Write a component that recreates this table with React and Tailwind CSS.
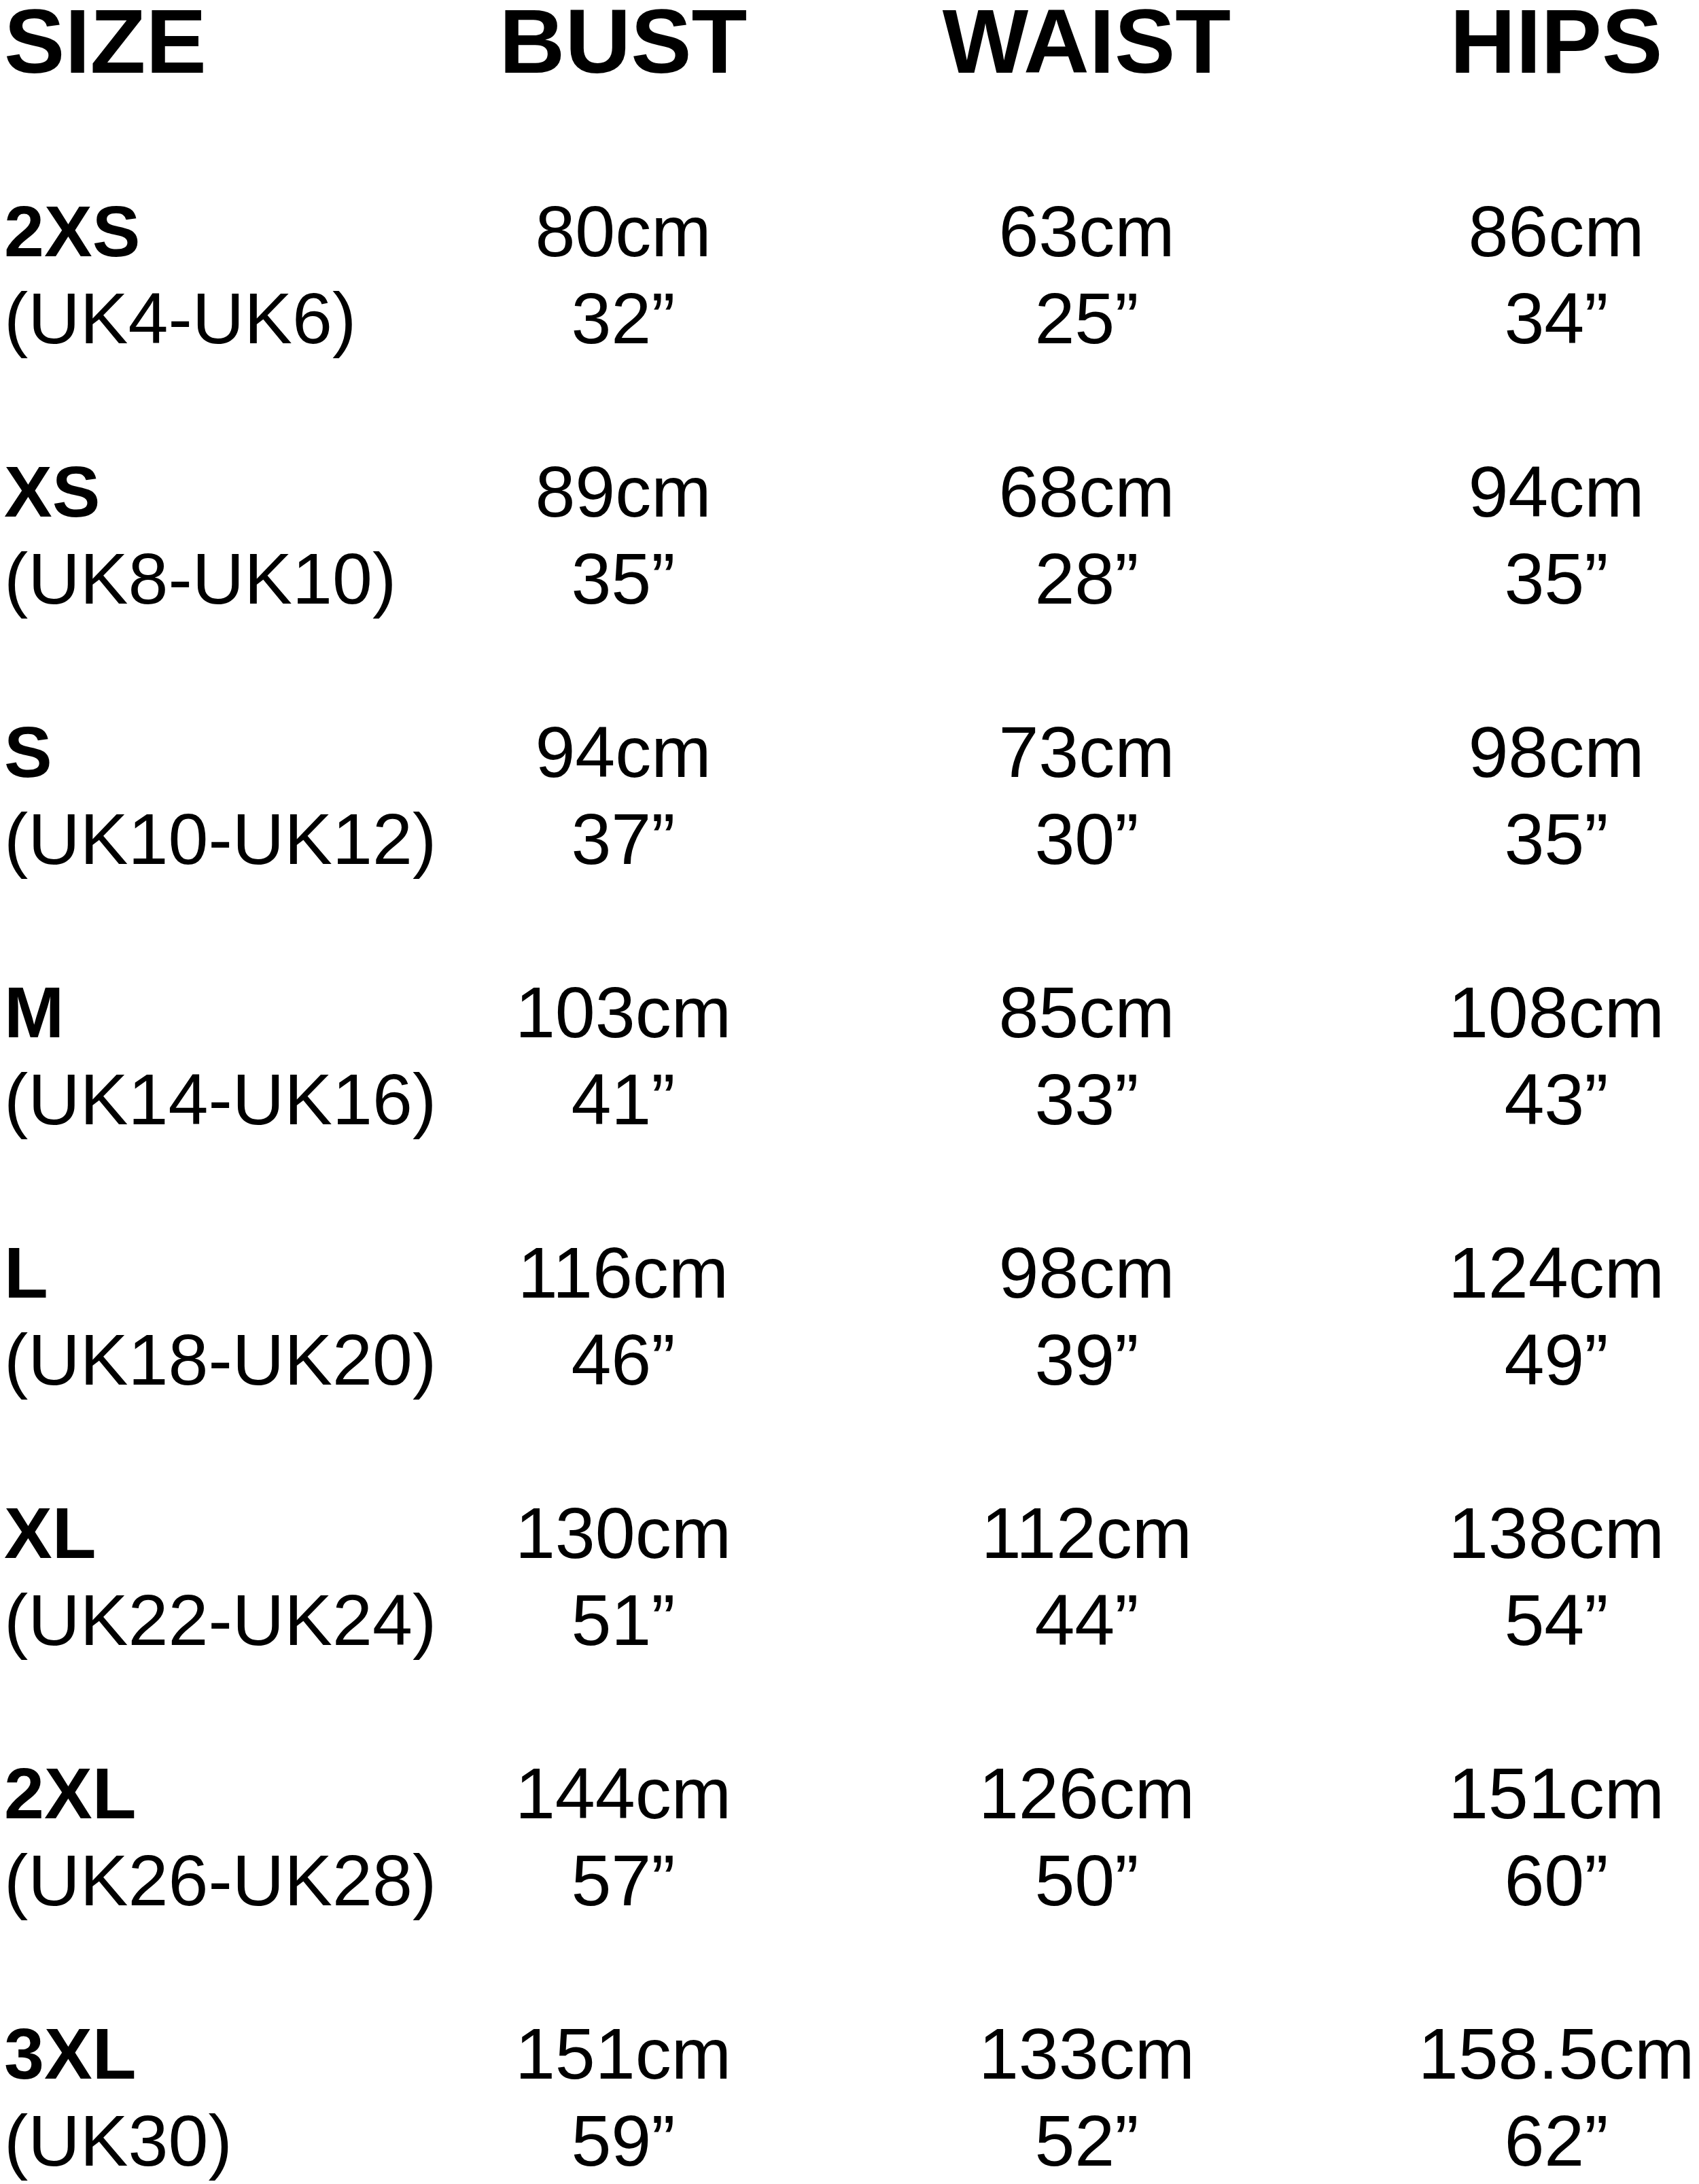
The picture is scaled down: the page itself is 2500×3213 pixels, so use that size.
import React from "react";

const rows = [
  ["2XS", "(UK4-UK6)", "80cm", "32”", "63cm", "25”", "86cm", "34”"],
  ["XS", "(UK8-UK10)", "89cm", "35”", "68cm", "28”", "94cm", "35”"],
  ["S", "(UK10-UK12)", "94cm", "37”", "73cm", "30”", "98cm", "35”"],
  ["M", "(UK14-UK16)", "103cm", "41”", "85cm", "33”", "108cm", "43”"],
  ["L", "(UK18-UK20)", "116cm", "46”", "98cm", "39”", "124cm", "49”"],
  ["XL", "(UK22-UK24)", "130cm", "51”", "112cm", "44”", "138cm", "54”"],
  ["2XL", "(UK26-UK28)", "144cm", "57”", "126cm", "50”", "151cm", "60”"],
  ["3XL", "(UK30)", "151cm", "59”", "133cm", "52”", "158.5cm", "62”"],
];

export default function App() {
  return (
    <div
      className="min-h-[3213px] w-[2500px] bg-white text-black"
      style={{ fontFamily: '"Liberation Sans", Arial, Helvetica, sans-serif' }}
    >
      <div className="grid grid-cols-[716px_402px_962px_420px] mb-[154px] text-[134px] font-bold leading-[122px]">
        <div className="pl-[6px]">SIZE</div>
        <div className="flex justify-center">BUST</div>
        <div className="flex justify-center">WAIST</div>
        <div className="flex justify-center">HIPS</div>
      </div>
      <div className="grid grid-cols-[716px_402px_962px_420px] gap-y-[127px] text-[106px] leading-[128px]">
        {rows.map((r) => (
          <React.Fragment key={r[0]}>
            <div className="pl-[6px] flex flex-col whitespace-nowrap">
              <span className="font-bold">{r[0]}</span>
              <span>{r[1]}</span>
            </div>
            <div className="flex flex-col items-center whitespace-nowrap">
              <span>{r[2]}</span>
              <span>{r[3]}</span>
            </div>
            <div className="flex flex-col items-center whitespace-nowrap">
              <span>{r[4]}</span>
              <span>{r[5]}</span>
            </div>
            <div className="flex flex-col items-center whitespace-nowrap">
              <span>{r[6]}</span>
              <span>{r[7]}</span>
            </div>
          </React.Fragment>
        ))}
      </div>
    </div>
  );
}
